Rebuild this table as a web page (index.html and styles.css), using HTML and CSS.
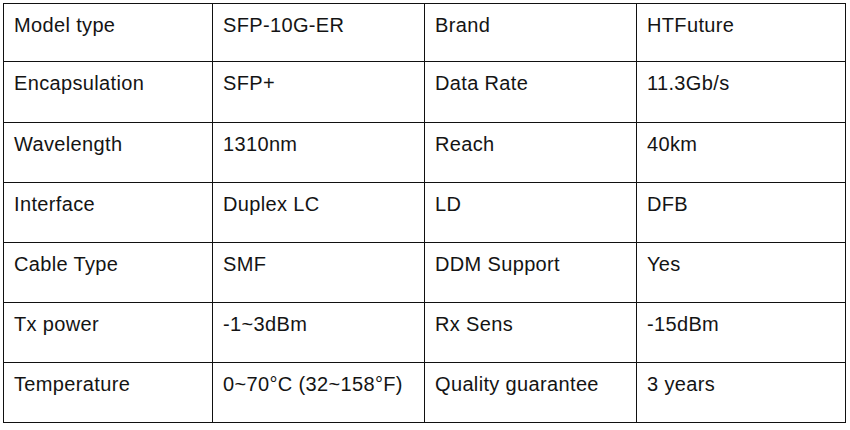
FILE: index.html
```html
<!DOCTYPE html>
<html>
<head>
<meta charset="utf-8">
<link rel="stylesheet" href="styles.css">
</head>
<body>
<div class="spec">
  <div class="cell">Model type</div><div class="cell">SFP-10G-ER</div><div class="cell">Brand</div><div class="cell">HTFuture</div>
  <div class="cell">Encapsulation</div><div class="cell">SFP+</div><div class="cell">Data Rate</div><div class="cell">11.3Gb/s</div>
  <div class="cell">Wavelength</div><div class="cell">1310nm</div><div class="cell">Reach</div><div class="cell">40km</div>
  <div class="cell">Interface</div><div class="cell">Duplex LC</div><div class="cell">LD</div><div class="cell">DFB</div>
  <div class="cell">Cable Type</div><div class="cell">SMF</div><div class="cell">DDM Support</div><div class="cell">Yes</div>
  <div class="cell">Tx power</div><div class="cell">-1~3dBm</div><div class="cell">Rx Sens</div><div class="cell">-15dBm</div>
  <div class="cell">Temperature</div><div class="cell">0~70°C (32~158°F)</div><div class="cell">Quality guarantee</div><div class="cell">3 years</div>
</div>
</body>
</html>
```
FILE: styles.css
```css
html, body {
  margin: 0;
  padding: 0;
  background: #fff;
}
body {
  padding: 3px 0 0 3px;
  font-family: "Liberation Sans", Arial, sans-serif;
}
.spec {
  display: grid;
  grid-template-columns: 208px 211px 211px 208px;
  grid-template-rows: 57px 60px 59px 59px 59px 59px 59px;
  gap: 1px;
  padding: 1px;
  background: #111;
  width: max-content;
}
.cell {
  background: #fff;
  color: #141414;
  font-size: 20px;
  line-height: 24px;
  letter-spacing: 0.35px;
  padding: 9px 10px 0 10px;
  white-space: nowrap;
}
```
